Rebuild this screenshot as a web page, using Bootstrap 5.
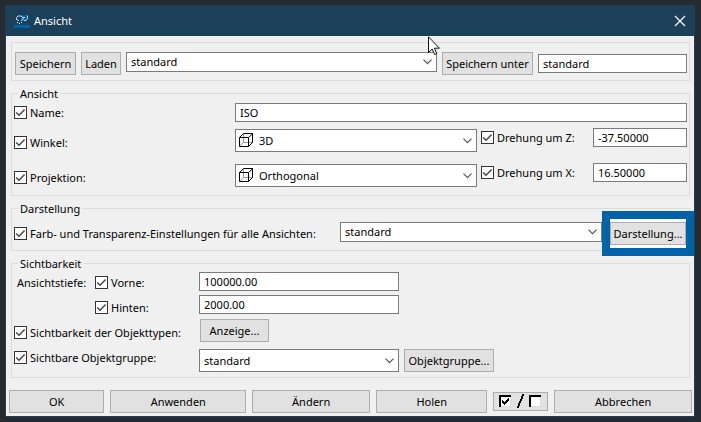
<!DOCTYPE html>
<html lang="de">
<head>
<meta charset="utf-8">
<meta name="viewport" content="width=device-width, initial-scale=1">
<title>Ansicht</title>
<link href="https://cdn.jsdelivr.net/npm/bootstrap@5.3.0/dist/css/bootstrap.min.css" rel="stylesheet">
<style>
  :root {
    --chevron: url("data:image/svg+xml,%3Csvg xmlns='http://www.w3.org/2000/svg' width='9' height='6' viewBox='0 0 9 6'%3E%3Cpath d='M.5 .7l4 4 4-4' fill='none' stroke='%23555' stroke-width='1.2'/%3E%3C/svg%3E");
    --cube: url("data:image/svg+xml,%3Csvg xmlns='http://www.w3.org/2000/svg' width='15' height='15' viewBox='0 0 15 15'%3E%3Cpath d='M4.500 1v8.500H14M4.500 9.500L1 13' fill='none' stroke='%23999'/%3E%3Cpath d='M.5 4.500h9v9h-9zM.5 4.500L4.500 .5h9.500l-4.500 4M13.500 .5v9l-4 4' fill='none' stroke='%23000'/%3E%3C/svg%3E");
    --tick: url("data:image/svg+xml,%3Csvg xmlns='http://www.w3.org/2000/svg' width='11' height='11' viewBox='0 0 11 11'%3E%3Cpath d='M1.200 5.400l2.800 2.800 5.600-5.800' fill='none' stroke='%23444' stroke-width='1.400'/%3E%3C/svg%3E");
  }
  body { background: #262b2f; color: #000; font: 11px/17px "Noto Sans", "Open Sans", sans-serif; padding: 5px; }
  .dialog { background: #f0f0f0; border: 1px solid #1c4059; border-top: 0; margin-right: 1px; }
  .titlebar { background: #1c4059; color: #fff; height: 31px; padding: 0 8px; }
  .close-x { border: 0; background: none; padding: 0; line-height: 0; }
  .content { padding: 6px 4px 0 5px; }
  .group { border: 1px solid #dcdcdc; padding: 0 2px; margin-bottom: 4px; }
  .group legend { float: none; width: auto; font-size: 11px; line-height: 17px; margin: 0 0 0 4px; padding: 0 2px; }
  .toolbar { padding: 9px 2px 5px 3px; gap: 5px; }
  .push { height: 23px; background: #e1e1e1; border: 1px solid #adadad; border-radius: 0; color: #000; font-size: 11px; line-height: 17px; padding: 1px 0; white-space: nowrap; }
  .push:hover { background: #e5f1fb; border-color: #0078d7; color: #000; }
  .field { height: 19px; min-height: 0; border: 1px solid #7a7a7a; border-radius: 0; color: #000; background-color: #fff; font-size: 11px; line-height: 17px; padding: 0 4px; }
  .pick { height: 20px; border: 1px solid #7a7a7a; border-radius: 0; color: #000; font-size: 11px; line-height: 17px; padding: 0 20px 1px 4px; background: #fff var(--chevron) no-repeat right 4px center; }
  .tall { height: 23px; }
  .with-cube { padding-left: 23px; padding-bottom: 0; background: var(--chevron) no-repeat right 4px center, var(--cube) no-repeat 3px 3px #fff; }
  .tick[type=checkbox] { width: 13px; height: 13px; margin: 0; border: 1px solid #333; border-radius: 0; flex: none; background-color: #fff; }
  .tick[type=checkbox]:checked { background-image: var(--tick); background-size: 11px 11px; }
  .option { gap: 3px; height: 21px; }
  .view-grid { display: grid; grid-template-columns: 221px minmax(0, 1fr) 116px 94px; padding: 1px 0 3px; row-gap: 6px; }
  .view-grid .tall { margin-top: 1px; }
  .span-rest { grid-column: 2 / -1; }
  .first { height: 19px; }
  .angle { height: 29px; }
  .appearance { padding: 5px 1px 5px 0; }
  .appearance .option { height: 23px; }
  .appearance-pick { width: 262px; }
  .marked { position: relative; width: 76px; margin-left: 8px; box-shadow: 0 -3px #fff, 0 3px #fff; }
  .marked::after { content: ""; position: absolute; inset: -12px -9px; border: 8px solid #0063a8; pointer-events: none; }
  .stack { gap: 4px; }
  .depth-rows { padding-bottom: 5px; }
  .labels { width: 185px; }
  .depth { padding-left: 3px; }
  .depth-name { width: 75px; }
  .values { width: 200px; }
  .actions { padding: 8px 2px 3px 3px; gap: 6px; }
  .w-save { width: 61px; } .w-load { width: 40px; } .w-as { width: 91px; } .w-name { width: 149px; }
  .w-show { width: 69px; margin: 1px 0 3px 1px; } .w-objects { width: 90px; margin-left: 5px; }
  .g-ok { flex: 95 1 0; } .g-apply { flex: 136 1 0; } .g-change { flex: 118 1 0; } .g-fetch { flex: 111 1 0; } .g-cancel { flex: 138 1 0; }
  .toggle-all { width: 55px; height: 19px; padding: 0; line-height: 0; }
  .pointer { position: absolute; left: 422px; top: 31px; }
</style>
</head>
<body>
<main class="dialog position-relative">
  <header class="titlebar d-flex align-items-center">
    <svg width="16" height="16" viewBox="0 0 16 16" aria-hidden="true">
      <path d="M0 12h16v3H0z" fill="#0063a8"/>
      <path d="M7 2h7v4l-3 2H8z" fill="#0063a8"/>
      <path d="M2.500 7V4.500L4 3h3l2 1.500v2L7 7.500M3 6.500l2 1.500M9 4.500h2M13.500 2.500v3l-1.500 2h-2" fill="none" stroke="#b5d9ee"/>
      <path d="M3 9.500h1M5 10.500h1M7 9.500h1" stroke="#fff"/>
    </svg>
    <span class="ms-1 flex-grow-1">Ansicht</span>
    <button type="button" class="close-x" aria-label="Schließen">
      <svg width="12" height="12" viewBox="0 0 12 12"><path d="M1 1l10 10M11 1L1 11" stroke="#fff" stroke-width="1.200"/></svg>
    </button>
  </header>

  <form class="content">
    <div class="group toolbar d-flex align-items-start">
      <button type="button" class="btn push w-save">Speichern</button>
      <button type="button" class="btn push w-load">Laden</button>
      <select class="form-select pick flex-grow-1 w-auto" aria-label="Gespeicherte Ansicht"><option>standard</option></select>
      <button type="button" class="btn push w-as">Speichern unter</button>
      <input type="text" class="form-control field w-name mt-auto mb-auto" value="standard" aria-label="Neuer Name">
    </div>

    <fieldset class="group">
      <legend>Ansicht</legend>
      <div class="view-grid align-items-start">
        <div class="option first d-flex align-items-center"><input class="form-check-input tick" type="checkbox" id="name" checked><label for="name">Name:</label></div>
        <input type="text" class="form-control field span-rest" value="ISO" aria-label="Name">

        <div class="option angle d-flex align-items-center"><input class="form-check-input tick" type="checkbox" id="winkel" checked><label for="winkel">Winkel:</label></div>
        <select class="form-select pick tall with-cube" aria-label="Winkel"><option>3D</option></select>
        <div class="option first d-flex align-items-center ps-1"><input class="form-check-input tick" type="checkbox" id="drehz" checked><label for="drehz">Drehung um Z:</label></div>
        <input type="text" class="form-control field" value="-37.50000" aria-label="Drehung um Z">

        <div class="option angle d-flex align-items-center"><input class="form-check-input tick" type="checkbox" id="proj" checked><label for="proj">Projektion:</label></div>
        <select class="form-select pick tall with-cube" aria-label="Projektion"><option>Orthogonal</option></select>
        <div class="option first d-flex align-items-center ps-1"><input class="form-check-input tick" type="checkbox" id="drehx" checked><label for="drehx">Drehung um X:</label></div>
        <input type="text" class="form-control field" value="16.50000" aria-label="Drehung um X">
      </div>
    </fieldset>

    <fieldset class="group">
      <legend>Darstellung</legend>
      <div class="appearance d-flex align-items-start">
        <div class="option d-flex align-items-center flex-grow-1"><input class="form-check-input tick" type="checkbox" id="farb" checked><label for="farb">Farb- und Transparenz-Einstellungen für alle Ansichten:</label></div>
        <select class="form-select pick appearance-pick" aria-label="Darstellung"><option>standard</option></select>
        <button type="button" class="btn push marked">Darstellung...</button>
      </div>
    </fieldset>

    <fieldset class="group">
      <legend>Sichtbarkeit</legend>
      <div class="depth-rows d-flex">
        <div class="labels stack d-flex flex-column">
          <div class="option depth d-flex align-items-center"><span class="depth-name">Ansichtstiefe:</span><input class="form-check-input tick" type="checkbox" id="vorne" checked><label for="vorne">Vorne:</label></div>
          <div class="option depth d-flex align-items-center"><span class="depth-name"></span><input class="form-check-input tick" type="checkbox" id="hinten" checked><label for="hinten">Hinten:</label></div>
          <div class="option d-flex align-items-center"><input class="form-check-input tick" type="checkbox" id="typen" checked><label for="typen">Sichtbarkeit der Objekttypen:</label></div>
          <div class="option d-flex align-items-center"><input class="form-check-input tick" type="checkbox" id="gruppe" checked><label for="gruppe">Sichtbare Objektgruppe:</label></div>
        </div>
        <div class="values stack d-flex flex-column">
          <input type="text" class="form-control field" value="100000.00" aria-label="Vorne">
          <input type="text" class="form-control field" value="2000.00" aria-label="Hinten">
          <button type="button" class="btn push w-show">Anzeige...</button>
          <select class="form-select pick tall" aria-label="Sichtbare Objektgruppe"><option>standard</option></select>
        </div>
        <button type="button" class="btn push w-objects align-self-end">Objektgruppe...</button>
      </div>
    </fieldset>
  </form>

  <footer class="actions d-flex align-items-center">
    <button type="button" class="btn push g-ok">OK</button>
    <button type="button" class="btn push g-apply">Anwenden</button>
    <button type="button" class="btn push g-change">Ändern</button>
    <button type="button" class="btn push g-fetch">Holen</button>
    <button type="button" class="btn push toggle-all" aria-label="Alle ein- oder ausschalten">
      <svg width="45" height="17" viewBox="0 0 45 17" shape-rendering="crispEdges">
        <path d="M1 2h12v12H1zM31 2h12v12H31z" fill="#fff"/>
        <path d="M13 2v12H1M43 2v12H31" transform="translate(-.5 -.5)" fill="none" stroke="#ddd"/>
        <path d="M2 14V3h11M32 14V3h11" transform="translate(-.5 -.5)" fill="none" stroke="#000" stroke-width="2"/>
        <path d="M4 7h1v1h1v1h1V8h1V7h1V6h1V5h1v3h-1v1H9v1H8v1H7v1H6v-1H5v-1H4z"/>
        <path d="M24 1h2v2h-1v3h-1v2h-1v2h-1v3h-1v2h-2v-2h1v-3h1V8h1V6h1V3h1z"/>
      </svg>
    </button>
    <button type="button" class="btn push g-cancel">Abbrechen</button>
  </footer>

  <svg class="pointer" width="13" height="20" viewBox="0 0 13 20" aria-hidden="true">
    <path d="M.5 .8v15.700l3.700-3.500 2.400 5.500 2.200-1-2.400-5.300h5z" fill="#fff" stroke="#111"/>
  </svg>
</main>
<script src="https://cdn.jsdelivr.net/npm/bootstrap@5.3.0/dist/js/bootstrap.bundle.min.js"></script>
</body>
</html>
